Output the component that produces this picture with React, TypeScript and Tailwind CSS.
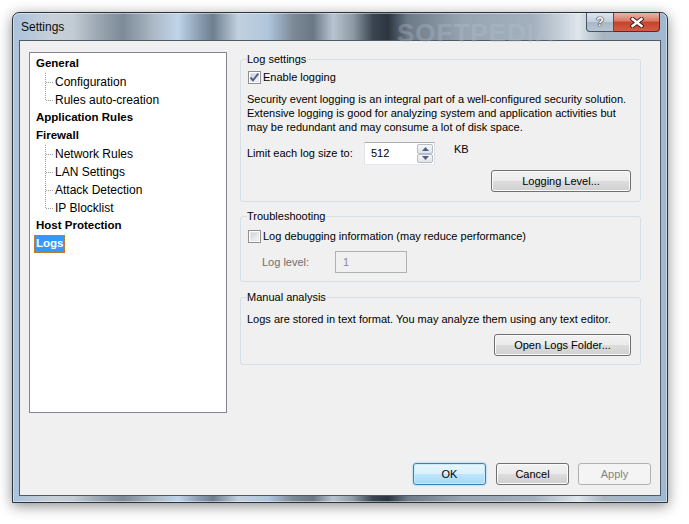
import type { ReactNode } from 'react'

type TreeNode = {
  label: string
  children?: string[]
  selected?: boolean
}

const TREE: TreeNode[] = [
  { label: 'General', children: ['Configuration', 'Rules auto-creation'] },
  { label: 'Application Rules' },
  { label: 'Firewall', children: ['Network Rules', 'LAN Settings', 'Attack Detection', 'IP Blocklist'] },
  { label: 'Host Protection' },
  { label: 'Logs', selected: true }
]

function Connector({ last }: { last: boolean }) {
  return (
    <svg width="19" height="18" className="shrink-0">
      <path d={last ? 'M9.5 0V9.5' : 'M9.5 0V18'} stroke="#9a9a9a" strokeDasharray="1 1" fill="none" />
      <path d="M10 9.5H17" stroke="#9a9a9a" strokeDasharray="1 1" fill="none" />
    </svg>
  )
}

function CheckBox({ checked }: { checked?: boolean }) {
  return (
    <span className="relative flex h-[13px] w-[13px] shrink-0 border border-[#8e8f8f] bg-white p-[1px]">
      <span className="flex-1 border border-[#e4e6e8] bg-[linear-gradient(135deg,#cdd1d6,#f7f7f7)]" />
      {checked && (
        <svg width="13" height="13" viewBox="0 0 13 13" className="absolute -left-[1px] -top-[1px]">
          <path d="M2.5 6.5L5 9.3L10.3 2.6" stroke="#4b5e91" strokeWidth="1.9" fill="none" />
        </svg>
      )}
    </span>
  )
}

function Button({
  children,
  width,
  variant = 'normal'
}: {
  children: ReactNode
  width: string
  variant?: 'normal' | 'default' | 'disabled'
}) {
  if (variant === 'disabled') {
    return (
      <div className={`${width} flex h-[22px] items-center justify-center rounded-[3px] border border-[#adb2b5] bg-[#f4f4f4] text-[#838383]`}>
        {children}
      </div>
    )
  }
  if (variant === 'default') {
    return (
      <div className={`${width} flex h-[22px] items-center justify-center rounded-[3px] border border-[#3c7fb1] bg-[linear-gradient(#eaf6fd_0%,#d9f0fc_50%,#bee6fd_50%,#a7d9f5_100%)] shadow-[inset_0_0_0_1px_#c8ecff,0_0_2px_#6ab8ea]`}>
        {children}
      </div>
    )
  }
  return (
    <div className={`${width} flex h-[22px] items-center justify-center rounded-[3px] border border-[#707070] bg-[linear-gradient(#f2f2f2_0%,#ebebeb_50%,#dddddd_50%,#cfcfcf_100%)] shadow-[inset_0_0_0_1px_#fbfbfb]`}>
      {children}
    </div>
  )
}

function SpinArrow({ up }: { up?: boolean }) {
  return (
    <div className="flex flex-1 items-center justify-center rounded-[2px] border border-[#b5bcc6] bg-[linear-gradient(#f6f7f8,#dfe3e8)]">
      <svg width="7" height="4" viewBox="0 0 7 4">
        <path d={up ? 'M0 4L3.5 0L7 4Z' : 'M0 0L3.5 4L7 0Z'} fill="#4d6185" />
      </svg>
    </div>
  )
}

function Group({ title, children, className = '' }: { title: string; children: ReactNode; className?: string }) {
  return (
    <fieldset className={`rounded-[3px] border border-[#d5dfe5] px-[6px] ${className}`}>
      <legend className="leading-[14px]">{title}</legend>
      {children}
    </fieldset>
  )
}

export default function App() {
  return (
    <div className="h-[524px] w-[689px] overflow-hidden bg-white pl-[12px] pt-[12px] font-['Liberation_Sans',Arial,sans-serif] text-[11px] text-black">
      <div className="flex h-[491px] w-[656px] flex-col rounded-t-[7px] border border-[#29333d] bg-[linear-gradient(90deg,#a9c2dc_0px,#c8d0d8_40px,#c3ccd4_60px,#9ba7b3_85px,#7d8a97_110px,#aab8c6_140px,#c0d4ea_165px,#8da0b4_185px,#6e7f90_200px,#c2d0de_225px,#b0c6dd_255px,#7c8a98_280px,#6a7886_300px,#b8c4d0_320px,#8e9aa6_340px,#3a4552_360px,#2c3540_375px,#6d7a88_395px,#97a5b3_450px,#a3b0bd_520px,#c9d3dc_550px,#dfe6ec_565px,#a9b5c1_590px,#9fb8d2_656px)] px-[6px] pb-[6px] shadow-[0_3px_14px_rgba(0,0,0,0.45),inset_0_0_0_1px_rgba(255,255,255,0.45)]">
        {/* title bar */}
        <div className="relative flex h-[27px] shrink-0 items-start">
          <span className="pointer-events-none absolute left-[378px] top-[1px] select-none text-[26px] font-bold tracking-[1px] text-[#b4c2d0] opacity-30">
            SOFTPEDIA
          </span>
          <span className="relative ml-[2px] self-center text-[12px] text-[#0b0b0b]">Settings</span>
          <div className="relative ml-auto mr-[1px] flex">
            <div className="flex h-[19px] w-[28px] items-center justify-center rounded-bl-[4px] border border-t-0 border-[#45525f] bg-[linear-gradient(#dce5ee_0%,#c3cfdb_50%,#a8b7c6_50%,#b7c5d3_100%)] pb-[1px] text-[13px] font-bold text-white [text-shadow:0_0_1px_#1c2630,0_0_1px_#1c2630,0_0_1px_#1c2630]">
              ?
            </div>
            <div className="flex h-[19px] w-[46px] items-center justify-center rounded-br-[4px] border border-l-0 border-t-0 border-[#5a2a22] bg-[linear-gradient(#eab3a6_0%,#d97a66_45%,#c5432c_50%,#d55c42_100%)]">
              <svg width="14" height="11" viewBox="0 0 14 11">
                <path d="M2.5 2L11.5 9M11.5 2L2.5 9" stroke="#3b1a14" strokeWidth="4.2" strokeLinecap="square" fill="none" />
                <path d="M2.5 2L11.5 9M11.5 2L2.5 9" stroke="#ffffff" strokeWidth="2.4" strokeLinecap="square" fill="none" />
              </svg>
            </div>
          </div>
        </div>

        {/* client area */}
        <div className="flex h-[456px] flex-col border border-[#4f5b67] bg-[#f0f0f0] pl-[9px] pr-[9px] pt-[11px]">
          <div className="flex h-[361px] gap-[13px]">
            {/* tree */}
            <div className="h-full w-[198px] shrink-0 border border-[#828790] bg-white pl-[6px] pt-[2px] text-[12px]">
              {TREE.map((node) => (
                <div key={node.label}>
                  <div className="flex h-[18px] items-center text-[11.5px] font-bold">
                    {node.selected ? (
                      <span className="-ml-[2px] flex h-[18px] items-center border border-dotted border-[#c27a35] bg-[#3399ff] px-[1px] text-white">
                        {node.label}
                      </span>
                    ) : (
                      node.label
                    )}
                  </div>
                  {node.children?.map((child, i) => (
                    <div key={child} className="flex h-[18px] items-center">
                      <Connector last={i === node.children!.length - 1} />
                      <span>{child}</span>
                    </div>
                  ))}
                </div>
              ))}
            </div>

            {/* settings */}
            <div className="flex w-[401px] flex-col">
              <Group title="Log settings" className="pb-[9px]">
                <div className="mt-[4px] flex h-[14px] items-center gap-[2px] pl-[1px]">
                  <CheckBox checked />
                  <span>Enable logging</span>
                </div>
                <p className="mt-[8px] whitespace-nowrap leading-[14px]">
                  Security event logging is an integral part of a well-configured security solution.
                  <br />
                  Extensive logging is good for analyzing system and application activities but
                  <br />
                  may be redundant and may consume a lot of disk space.
                </p>
                <div className="mt-[8px] flex h-[23px]">
                  <span className="w-[117px] self-center">Limit each log size to:</span>
                  <div className="flex h-[23px] w-[71px] border border-[#abadb3] border-b-[#e3e9ef] border-l-[#e2e3ea] border-r-[#dbdfe6] bg-white">
                    <span className="flex-1 self-center pl-[6px]">512</span>
                    <div className="flex w-[17px] flex-col py-[1px] pr-[1px]">
                      <SpinArrow up />
                      <SpinArrow />
                    </div>
                  </div>
                  <span className="ml-[19px] leading-[14px]">KB</span>
                </div>
                <div className="mt-[5px] flex justify-end pr-[3px]">
                  <Button width="w-[140px]">Logging Level...</Button>
                </div>
              </Group>

              <Group title="Troubleshooting" className="mt-[7px] pb-[8px]">
                <div className="mt-[6px] flex h-[14px] items-center gap-[2px] pl-[1px]">
                  <CheckBox />
                  <span>Log debugging information (may reduce performance)</span>
                </div>
                <div className="mt-[8px] flex h-[22px] items-center pl-[15px]">
                  <span className="w-[73px] text-[#6d6d6d]">Log level:</span>
                  <div className="flex h-[22px] w-[72px] items-start border border-[#adb2b5] bg-[#f0f0f0] pl-[7px] pt-[2px] text-[#8a8a8a]">
                    1
                  </div>
                </div>
              </Group>

              <Group title="Manual analysis" className="mt-[8px] pb-[8px]">
                <p className="mt-[8px] whitespace-nowrap leading-[14px]">
                  Logs are stored in text format. You may analyze them using any text editor.
                </p>
                <div className="mt-[8px] flex justify-end pr-[3px]">
                  <Button width="w-[137px]">Open Logs Folder...</Button>
                </div>
              </Group>
            </div>
          </div>

          <div className="mt-[50px] flex justify-end">
            <div className="mr-[10px]">
              <Button width="w-[73px]" variant="default">
                OK
              </Button>
            </div>
            <div className="mr-[9px]">
              <Button width="w-[73px]">Cancel</Button>
            </div>
            <Button width="w-[73px]" variant="disabled">
              Apply
            </Button>
          </div>
        </div>
      </div>
    </div>
  )
}
